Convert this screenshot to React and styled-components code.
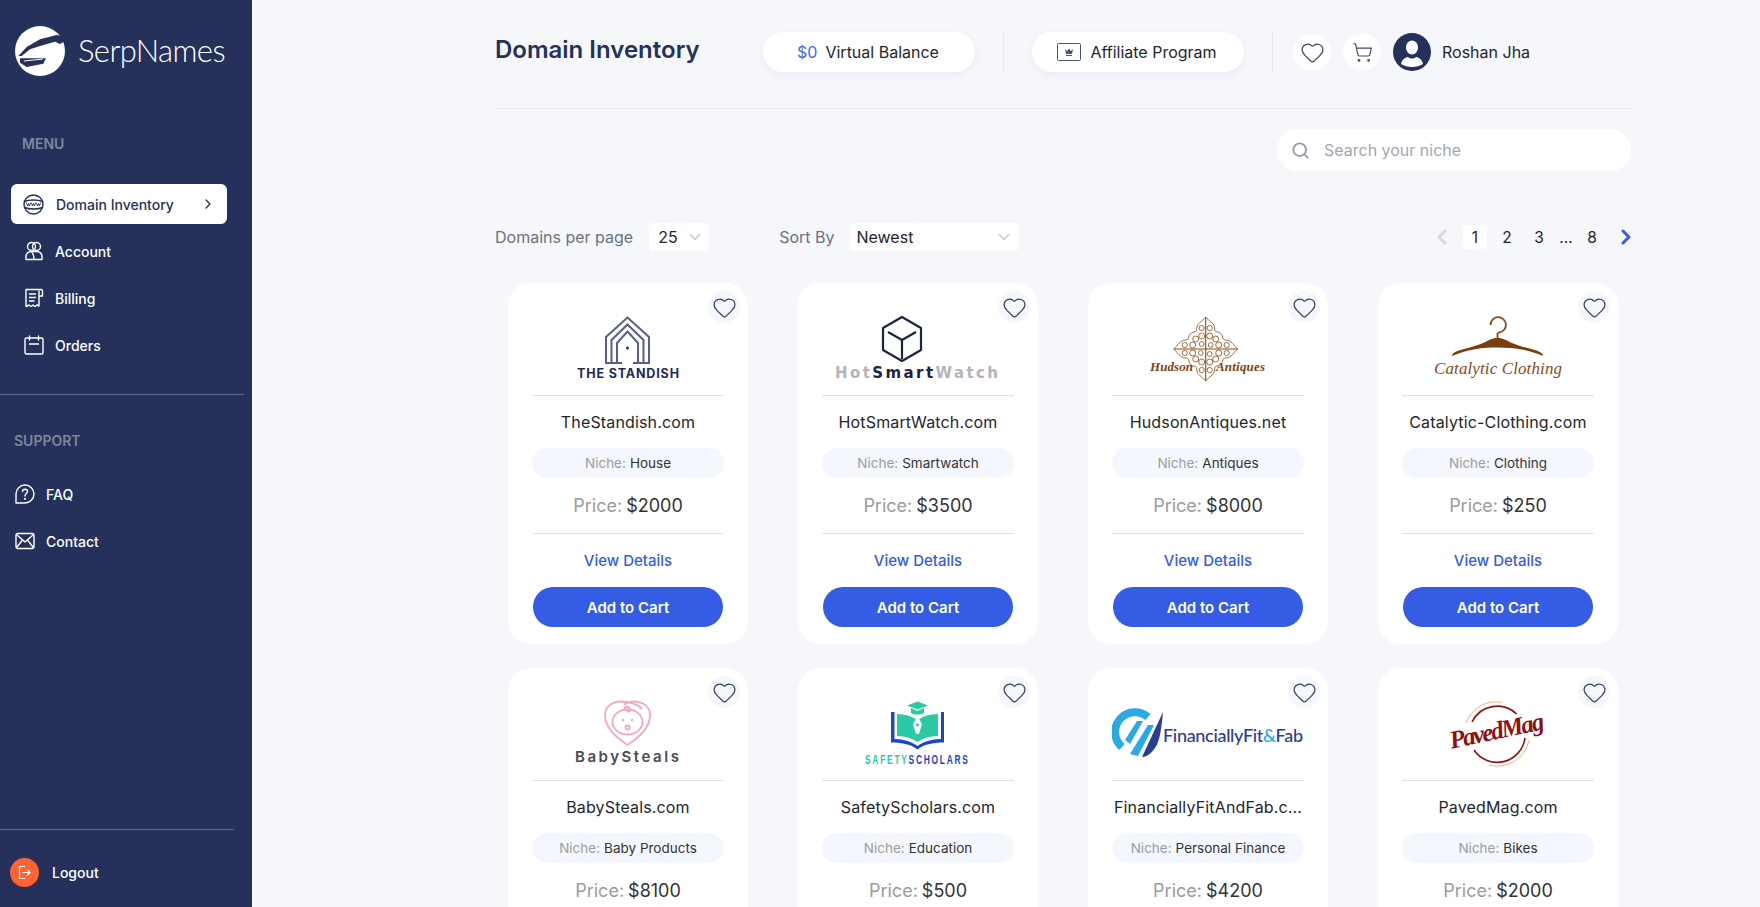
import React from "react";
import styled, { createGlobalStyle } from "styled-components";
import { ChevronDown, ChevronLeft, ChevronRight, Heart, Search, ShoppingCart } from "lucide-react";

const GlobalStyle = createGlobalStyle`
  html, body {
    margin: 0;
    padding: 0;
    height: 100%;
    overflow: hidden;
    background: #f5f7fb;
    font-family: "Inter", "Liberation Sans", sans-serif;
  }
  * { box-sizing: border-box; }
`;

const Page = styled.div`
  display: flex;
  height: 100vh;
  overflow: hidden;
`;

/* ---- sidebar ---- */

const Sidebar = styled.aside`
  display: flex;
  flex-direction: column;
  flex: 0 0 252px;
  background: #25315a;
  color: #fff;
`;

const Brand = styled.div`
  display: flex;
  align-items: center;
  gap: 13px;
  height: 50px;
  margin-top: 26px;
  padding-left: 15px;
`;

const BrandName = styled.span`
  padding-bottom: 2px;
  font-family: "Lato", sans-serif;
  font-weight: 300;
  font-size: 31px;
  letter-spacing: -0.6px;
  color: #fff;
`;

const SectionLabel = styled.div`
  font-size: 14px;
  line-height: 20px;
  font-weight: 600;
  color: #7f869f;
  margin-top: ${(p) => p.$top}px;
  padding-left: ${(p) => p.$left}px;
`;

const Nav = styled.nav`
  display: flex;
  flex-direction: column;
  gap: 7px;
  margin-top: ${(p) => p.$top}px;
  padding-left: ${(p) => p.$left}px;
`;

const NavItem = styled.a`
  display: flex;
  align-items: center;
  width: 216px;
  height: 40px;
  gap: ${(p) => (p.$active ? 12 : 11)}px;
  padding: 0 ${(p) => (p.$active ? "11px" : "0")} 0 ${(p) => p.$pad}px;
  border-radius: 6px;
  font-size: 14px;
  font-weight: 500;
  color: ${(p) => (p.$active ? "#25315a" : "#fff")};
  background: ${(p) => (p.$active ? "#fff" : "transparent")};
`;

const NavIcon = styled.svg`
  flex: 0 0 auto;
  width: ${(p) => p.$size || 20}px;
  height: ${(p) => p.$size || 20}px;
  fill: none;
  stroke: currentColor;
  stroke-width: 1.4;
  stroke-linecap: round;
  stroke-linejoin: round;
`;

const NavText = styled.span`
  flex: 1;
`;

const SideRule = styled.div`
  width: ${(p) => p.$width}px;
  height: 1px;
  background: rgba(255, 255, 255, 0.28);
  margin-top: ${(p) => p.$top}px;
`;

const SideFooter = styled.div`
  margin-top: auto;
  padding-bottom: 20px;
`;

const Logout = styled.a`
  display: flex;
  align-items: center;
  gap: 13px;
  margin-top: 28px;
  padding-left: 10px;
  font-size: 14px;
  font-weight: 500;
  color: #fff;
`;

const LogoutBadge = styled.span`
  display: flex;
  align-items: center;
  justify-content: center;
  width: 29px;
  height: 29px;
  border-radius: 50%;
  background: #ff6332;
`;

/* ---- main ---- */

const Main = styled.main`
  flex: 1;
  padding: 0 129px 0 243px;
`;

const Header = styled.header`
  display: flex;
  align-items: flex-start;
  height: 109px;
  padding-top: 32px;
  border-bottom: 1px solid #e3e6ee;
`;

const Title = styled.h1`
  flex: 0 0 268px;
  margin: 0;
  font-size: 24px;
  line-height: 36px;
  font-weight: 600;
  color: #25315a;
`;

const HeaderPill = styled.div`
  display: flex;
  align-items: center;
  justify-content: center;
  gap: ${(p) => p.$gap}px;
  width: 212px;
  height: 40px;
  padding-right: 2px;
  border-radius: 20px;
  background: #fff;
  box-shadow: 0 3px 8px rgba(40, 50, 90, 0.06);
  font-size: 16px;
  color: #25262b;
`;

const Amount = styled.span`
  color: #4668ee;
`;

const HeaderRule = styled.div`
  width: 1px;
  height: 40px;
  margin: 0 ${(p) => p.$right}px 0 28px;
  background: #e3e6ee;
`;

const RoundButton = styled.div`
  display: flex;
  align-items: center;
  justify-content: center;
  width: 38px;
  height: 36px;
  margin: 2px 12px 0 0;
  border-radius: 50%;
  background: #fff;
  color: #3a4468;
`;

const Avatar = styled.svg`
  width: 38px;
  height: 38px;
  margin: 1px 11px 0 0;
`;

const UserName = styled.span`
  font-size: 16px;
  line-height: 40px;
  color: #25262b;
`;

const SearchRow = styled.div`
  display: flex;
  justify-content: flex-end;
  margin-top: 20px;
`;

const SearchBox = styled.label`
  display: flex;
  align-items: center;
  gap: 12px;
  width: 354px;
  height: 42px;
  padding-left: 14px;
  border-radius: 21px;
  background: #fff;
  color: #9a9dab;
`;

const SearchInput = styled.input`
  flex: 1;
  min-width: 0;
  border: none;
  outline: none;
  background: transparent;
  font: 400 16px "Inter", sans-serif;
  color: #25262b;
  &::placeholder {
    color: #a3a6b4;
    opacity: 1;
  }
`;

const Filters = styled.div`
  display: flex;
  align-items: center;
  height: 28px;
  margin-top: 52px;
`;

const FilterLabel = styled.span`
  margin-right: 16px;
  font-size: 16px;
  color: #6d717d;
`;

const Select = styled.div`
  display: flex;
  align-items: center;
  justify-content: space-between;
  width: ${(p) => p.$width}px;
  height: 28px;
  margin-right: ${(p) => p.$right}px;
  padding: 0 5px 0 ${(p) => p.$pad}px;
  border-radius: 3px;
  background: #fff;
  font-size: 16px;
  color: #25262b;
`;

const Pager = styled.div`
  display: flex;
  align-items: center;
  margin-left: auto;
  margin-right: -7px;
  font-size: 15.5px;
  color: #25262b;
`;

const PageNumber = styled.span`
  display: flex;
  align-items: center;
  justify-content: center;
  width: ${(p) => p.$width || 24}px;
  height: 24px;
  margin-left: ${(p) => p.$left || 0}px;
  border-radius: 4px;
  background: ${(p) => (p.$active ? "#fff" : "transparent")};
`;

const NextArrow = styled(ChevronRight)`
  margin-left: 10px;
`;

const Grid = styled.div`
  display: grid;
  grid-template-columns: repeat(4, 240px);
  column-gap: 50px;
  row-gap: 24px;
  margin-top: 32px;
  padding-left: 13px;
`;

const Card = styled.article`
  position: relative;
  display: flex;
  flex-direction: column;
  align-items: center;
  height: 361px;
  padding: 0 24px;
  border-radius: 22px;
  background: #fff;
`;

const Favourite = styled.div`
  position: absolute;
  top: 8px;
  right: 8px;
  display: flex;
  align-items: center;
  justify-content: center;
  width: 32px;
  height: 32px;
  border-radius: 50%;
  background: #f5f7fb;
  color: #33406a;
`;

const LogoBox = styled.svg`
  display: block;
  flex: 0 0 auto;
  width: 192px;
  height: 112px;
`;

const Rule = styled.div`
  flex: 0 0 auto;
  width: 192px;
  height: 1px;
  background: #e1e1ee;
`;

const DomainName = styled.div`
  margin-top: 16px;
  font-size: 16px;
  line-height: 20px;
  letter-spacing: 0.15px;
  color: #25262b;
  white-space: nowrap;
`;

const Niche = styled.div`
  display: flex;
  align-items: center;
  justify-content: center;
  gap: 4px;
  width: 192px;
  height: 30px;
  margin-top: 16px;
  border-radius: 15px;
  background: #f4f7fe;
  font-size: 13.5px;
  color: #333;
`;

const Muted = styled.span`
  color: #9c9c9c;
`;

const Price = styled.div`
  display: flex;
  gap: 4px;
  margin-top: 16px;
  margin-bottom: 15px;
  font-size: 18px;
  line-height: 24px;
  color: #333;
`;

const ViewLink = styled.a`
  margin-top: 17px;
  font-size: 15px;
  line-height: 20px;
  font-weight: 500;
  color: #355ce4;
`;

const CartButton = styled.button`
  width: 190px;
  height: 40px;
  margin-top: 16px;
  border: none;
  border-radius: 20px;
  background: #355ce4;
  color: #fff;
  font: 600 15px "Inter", sans-serif;
`;

/* ---- logos: coordinates are px from the top-left of the logo box ---- */

const StandishLogo = () => (
  <LogoBox viewBox="0 0 192 112">
    <g fill="none" stroke="#55608a" strokeWidth="2">
      <path d="M90 80H74V54L95.5 34.5L117 54V80H101" />
      <path d="M79.5 80V57L95.5 41.5L111.5 57V80" />
      <path d="M85 80V60L95.5 48.5L106 60V80" />
    </g>
    <circle cx="95.5" cy="65" r="1.5" fill="#25315a" />
    <text x="96" y="94.5" textAnchor="middle" textLength="102" fontFamily="Inter" fontWeight="700" fontSize="12.5" fill="#1f2a55">
      THE STANDISH
    </text>
  </LogoBox>
);

const HotSmartLogo = () => (
  <LogoBox viewBox="0 0 192 112">
    <g fill="none" stroke="#1b2540" strokeWidth="2.2" strokeLinejoin="round">
      <path d="M80 34L99 45V67L80 78L61 67V45Z" />
      <path d="M66 49L80 57L94 49M80 57V76" />
    </g>
    <text x="13" y="94.5" textLength="163" fontFamily="DejaVu Sans" fontWeight="700" fontSize="15" fill="#b4b4b8">
      Hot<tspan fill="#1b2540">Smart</tspan>Watch
    </text>
  </LogoBox>
);

const HudsonLogo = () => (
  <LogoBox viewBox="0 0 192 112">
    <g transform="translate(93.7 66)" fill="none" stroke="#8a4b16" strokeWidth="0.8">
      <path d="M0 -32V32M-32 0H32" strokeWidth="1.1" />
      {[0, 90, 180, 270].map((r) => (
        <g key={r} transform={`rotate(${r})`}>
          <path d="M0 -32C-3 -28 -9 -26 -9 -20C-9 -18 -10 -17 -12 -17C-15 -16 -17 -14 -17 -12C-17 -10 -18 -9 -20 -9C-26 -9 -28 -3 -32 0" />
          <circle cx="-4" cy="-21" r="2.6" />
          <circle cx="-21" cy="-4" r="2.6" />
          <circle cx="-4" cy="-13" r="3" />
          <circle cx="-13" cy="-4" r="3" />
          <circle cx="-10" cy="-10" r="3" />
          <circle cx="-4" cy="-5" r="2.4" />
        </g>
      ))}
    </g>
    <g fontFamily="Liberation Serif" fontWeight="700" fontStyle="italic" fontSize="13" fill="#7c4312">
      <text x="38" y="88" textLength="43">Hudson</text>
      <text x="104" y="88" textLength="49">Antiques</text>
    </g>
  </LogoBox>
);

const CatalyticLogo = () => (
  <LogoBox viewBox="0 0 192 112">
    <path d="M88.5 42A7.7 7.7 0 1 1 97 49.5L95.5 50.5V56" fill="none" stroke="#8a4b16" strokeWidth="1.8" />
    <path d="M50 73C50 66 72 66 87 57L93 55H98L104 57C119 66 141 66 141 73C125 66 110 64.5 95.5 64.5C81 64.5 66 66 50 73Z" fill="#7a3f0a" />
    <text x="32" y="91" textLength="128" fontFamily="Liberation Serif" fontStyle="italic" fontSize="17" fill="#8a4b20">
      Catalytic Clothing
    </text>
  </LogoBox>
);

const BabyLogo = () => (
  <LogoBox viewBox="0 0 192 112">
    <g fill="none" stroke="#f4a7c4" strokeWidth="1.8">
      <path d="M95.5 77C84 69 73 60 73 47C73 38 81 33.5 89 33.5C100 33.5 108 38 110 41M95.5 77C107 69 118 60 118 47C118 38 110 33.5 102 33.5C98 33.5 94 35 92 37" />
      <ellipse cx="95.5" cy="54" rx="15" ry="12.5" />
      <path d="M92 42C92 38 98 38 98 42C98 44 95 44 95 42" />
      <circle cx="95.5" cy="59.5" r="2" />
    </g>
    <circle cx="91" cy="52" r="1.2" fill="#f4a7c4" />
    <circle cx="100" cy="52" r="1.2" fill="#f4a7c4" />
    <text x="43" y="94" textLength="104" fontFamily="Inter" fontWeight="600" fontSize="15" fill="#4b4b4e">
      BabySteals
    </text>
  </LogoBox>
);

const ScholarsLogo = () => (
  <LogoBox viewBox="0 0 192 112">
    <path d="M69 44H72.5V71C82 71 90 74 95.5 78C101 74 109 71 119 71V44H122V74.5C110 74.5 102 76.5 95.5 81.5C89 76.5 81 74.5 69 74.5Z" fill="#1c45c8" />
    <path d="M75 46C83 46 90 48 95.5 52C101 48 108 46 116 46V68C108 68 101 70 95.5 74C90 70 83 68 75 68Z" fill="#2bc9a5" />
    <path d="M95.5 33.5L106 37.5L95.5 41.5L85 37.5Z" fill="#2bc9a5" />
    <path d="M89 40V45C92 47 99 47 102 45V40L95.5 43Z" fill="#2bc9a5" />
    <path d="M95.5 48L100 56L97 66H94L91 56Z" fill="#fff" />
    <circle cx="95.5" cy="57" r="1.4" fill="#2bc9a5" />
    <text transform="translate(43 96) scale(0.62 1)" textLength="166" fontFamily="Liberation Sans" fontWeight="700" fontSize="13.5" fill="#2bc9a5">
      SAFETY<tspan fill="#1c45c8">SCHOLARS</tspan>
    </text>
  </LogoBox>
);

const FinanciallyLogo = () => (
  <LogoBox viewBox="0 0 192 112">
    <path d="M36 49A19 19 0 1 0 10 79" fill="none" stroke="#2aa9e3" strokeWidth="8" />
    <path d="M13 72L25 53H31L18 76ZM18 86L36 57H42L26 88Z" fill="#2aa9e3" />
    <path d="M30 89L51 44C50 56 48 74 43 80C39 86 34 89 30 89Z" fill="#2b3d8f" />
    <text x="51" y="74" textLength="140" fontFamily="Lato" fontWeight="500" fontSize="18" fill="#2b3d8f">
      FinanciallyFit<tspan fill="#2aa9e3">&amp;</tspan>Fab
    </text>
  </LogoBox>
);

const PavedLogo = () => (
  <LogoBox viewBox="0 0 192 112">
    <g fill="none">
      <path d="M70 54A28 28 0 0 1 114.6 46M123 70A28 28 0 0 1 72 82" stroke="#8e1010" strokeWidth="1.6" />
      <path d="M64 55A32 32 0 0 1 100 34.3M127 72A32 32 0 0 1 87 97" stroke="#f5b27a" strokeWidth="1" />
    </g>
    <text x="95" y="71" textAnchor="middle" textLength="96" transform="rotate(-12 95 64)" fontFamily="Liberation Serif" fontWeight="700" fontStyle="italic" fontSize="25" fill="#8e1010">
      PavedMag
    </text>
  </LogoBox>
);

const domains = [
  { name: "TheStandish.com", niche: "House", price: 2000, Logo: StandishLogo, actions: true },
  { name: "HotSmartWatch.com", niche: "Smartwatch", price: 3500, Logo: HotSmartLogo, actions: true },
  { name: "HudsonAntiques.net", niche: "Antiques", price: 8000, Logo: HudsonLogo, actions: true },
  { name: "Catalytic-Clothing.com", niche: "Clothing", price: 250, Logo: CatalyticLogo, actions: true },
  { name: "BabySteals.com", niche: "Baby Products", price: 8100, Logo: BabyLogo },
  { name: "SafetyScholars.com", niche: "Education", price: 500, Logo: ScholarsLogo },
  { name: "FinanciallyFitAndFab.c...", niche: "Personal Finance", price: 4200, Logo: FinanciallyLogo },
  { name: "PavedMag.com", niche: "Bikes", price: 2000, Logo: PavedLogo },
];

const DomainCard = ({ name, niche, price, Logo, actions }) => (
  <Card>
    <Favourite>
      <Heart size={25} strokeWidth={1.2} />
    </Favourite>
    <Logo />
    <Rule />
    <DomainName>{name}</DomainName>
    <Niche>
      <Muted>Niche:</Muted> {niche}
    </Niche>
    <Price>
      <Muted>Price:</Muted> ${price}
    </Price>
    <Rule />
    {actions && (
      <>
        <ViewLink>View Details</ViewLink>
        <CartButton>Add to Cart</CartButton>
      </>
    )}
  </Card>
);

export default function App() {
  return (
    <Page>
      <GlobalStyle />
      <Sidebar>
        <Brand>
          <svg width="50" height="50" viewBox="0 0 50 50">
            <circle cx="25" cy="25" r="25" fill="#fff" />
            <path d="M41.7 9L25 13.3L11.7 21L3.3 30H6.7L15 23.3L28.3 19L40 15.7L45 18L50 15L46.7 10Z" fill="#25315a" />
            <path d="M5 32.3L31 32.3L28.3 37.7L11.7 41L5 36.7Z" fill="#25315a" />
            <path d="M9 35L28 33" stroke="#fff" strokeWidth="1" />
          </svg>
          <BrandName>SerpNames</BrandName>
        </Brand>

        <SectionLabel $top={58} $left={22}>MENU</SectionLabel>
        <Nav $top={30} $left={11}>
          <NavItem $active $pad={12}>
            <NavIcon $size={21} viewBox="0 0 21 21">
              <circle cx="10.5" cy="10.5" r="9.5" />
              <path d="M1.5 7.5C6 5.5 15 5.5 19.5 7.5M1.5 13.5C6 15.5 15 15.5 19.5 13.5" />
              <path d="M3.5 9L4.5 12L5.5 9.5L6.5 12L7.5 9M8.5 9L9.5 12L10.5 9.5L11.5 12L12.5 9M13.5 9L14.5 12L15.5 9.5L16.5 12L17.5 9" strokeWidth="0.9" />
            </NavIcon>
            <NavText>Domain Inventory</NavText>
            <ChevronRight size={16} strokeWidth={2} />
          </NavItem>
          <NavItem $pad={13}>
            <NavIcon viewBox="0 0 20 20">
              <circle cx="7.5" cy="5.5" r="4" />
              <circle cx="12.5" cy="5.5" r="4" />
              <path d="M2 18.5V15.5C2 12.5 4.5 10.5 7 10.5H13C15.5 10.5 18 12.5 18 15.5V18.5H2Z" />
              <path d="M10 18.5C10 14 8.5 11.5 7 10.5" />
            </NavIcon>
            <NavText>Account</NavText>
          </NavItem>
          <NavItem $pad={13}>
            <NavIcon viewBox="0 0 20 20">
              <path d="M15 3V18L13 17L11 18.5L9 17L7 18.5L5 17L2 18.5V1.5H17C18 1.5 18.5 2.5 18.5 3.5V8H15" />
              <path d="M5.5 6H11.5M5.5 9.5H11.5M5.5 13H10" />
            </NavIcon>
            <NavText>Billing</NavText>
          </NavItem>
          <NavItem $pad={13}>
            <NavIcon viewBox="0 0 20 20">
              <rect x="1" y="3" width="18" height="16" rx="1.5" />
              <path d="M5.5 1V5M14.5 1V5M5.5 9H14.5" />
            </NavIcon>
            <NavText>Orders</NavText>
          </NavItem>
        </Nav>

        <SideRule $width={244} $top={29} />

        <SectionLabel $top={36} $left={14}>SUPPORT</SectionLabel>
        <Nav $top={23} $left={15}>
          <NavItem $pad={0}>
            <NavIcon viewBox="0 0 20 20">
              <path d="M1 19V10A9 9 0 1 1 10 19Z" />
              <path d="M7.5 7.5C7.5 4.5 12.5 4.5 12.5 7.5C12.5 9.5 10 9.5 10 12" />
              <circle cx="10" cy="14.8" r="0.4" />
            </NavIcon>
            <NavText>FAQ</NavText>
          </NavItem>
          <NavItem $pad={0}>
            <NavIcon viewBox="0 0 20 20">
              <rect x="1" y="2.5" width="18" height="15" rx="2" />
              <path d="M2 4L10 11L18 4M2 16L7.5 9M18 16L12.5 9" />
            </NavIcon>
            <NavText>Contact</NavText>
          </NavItem>
        </Nav>

        <SideFooter>
          <SideRule $width={234} $top={0} />
          <Logout>
            <LogoutBadge>
              <svg width="15" height="15" viewBox="0 0 15 15" fill="none" stroke="#fff" strokeWidth="1.2">
                <path d="M8 1.5H2.5V13.5H8" />
                <path d="M5.5 7.5H13M10.5 5L13 7.5L10.5 10" />
              </svg>
            </LogoutBadge>
            Logout
          </Logout>
        </SideFooter>
      </Sidebar>

      <Main>
        <Header>
          <Title>Domain Inventory</Title>
          <HeaderPill $gap={8}>
            <Amount>$0</Amount> Virtual Balance
          </HeaderPill>
          <HeaderRule $right={28} />
          <HeaderPill $gap={9}>
            <svg width="24" height="18" viewBox="0 0 24 18" fill="none">
              <rect x="0.5" y="0.5" width="23" height="17" rx="1" stroke="#4a5478" />
              <path d="M8 6L10 8L12 5.5L14 8L16 6L15 11H9Z" fill="#4a5478" />
              <path d="M9 12.5H15" stroke="#4a5478" />
            </svg>
            Affiliate Program
          </HeaderPill>
          <HeaderRule $right={20} />
          <RoundButton>
            <Heart size={25} strokeWidth={1.2} />
          </RoundButton>
          <RoundButton>
            <ShoppingCart size={21} strokeWidth={1.3} />
          </RoundButton>
          <Avatar viewBox="0 0 38 38">
            <circle cx="19" cy="19" r="19" fill="#25315a" />
            <ellipse cx="19" cy="14.5" rx="6" ry="7" fill="#fff" />
            <path d="M8 31C9 26 13 24 15 24C17 26 21 26 23 24C25 24 29 26 30 31C24 35 14 35 8 31Z" fill="#fff" />
          </Avatar>
          <UserName>Roshan Jha</UserName>
        </Header>

        <SearchRow>
          <SearchBox>
            <Search size={19} strokeWidth={2.4} />
            <SearchInput placeholder="Search your niche" />
          </SearchBox>
        </SearchRow>

        <Filters>
          <FilterLabel>Domains per page</FilterLabel>
          <Select $width={60} $right={70} $pad={9}>
            25 <ChevronDown size={18} color="#c4c6cf" />
          </Select>
          <FilterLabel>Sort By</FilterLabel>
          <Select $width={168} $right={0} $pad={6}>
            Newest <ChevronDown size={18} color="#c4c6cf" />
          </Select>
          <Pager>
            <ChevronLeft size={24} strokeWidth={3} color="#d5d8e2" />
            <PageNumber $active $left={9}>1</PageNumber>
            <PageNumber $left={8}>2</PageNumber>
            <PageNumber $left={8}>3</PageNumber>
            <PageNumber $width={14} $left={8}>...</PageNumber>
            <PageNumber $left={7}>8</PageNumber>
            <NextArrow size={24} strokeWidth={3} color="#355ce4" />
          </Pager>
        </Filters>

        <Grid>
          {domains.map((d) => (
            <DomainCard key={d.name} {...d} />
          ))}
        </Grid>
      </Main>
    </Page>
  );
}
